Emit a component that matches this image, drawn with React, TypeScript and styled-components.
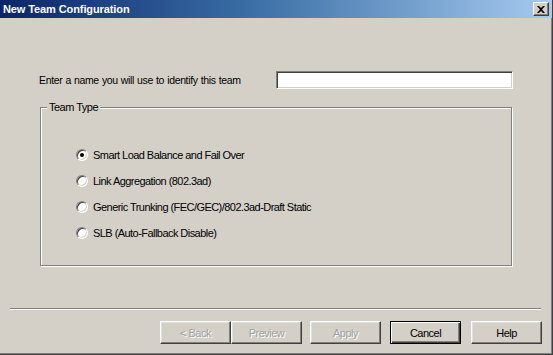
import React, { useState } from 'react';
import styled, { createGlobalStyle } from 'styled-components';

// Estilos globais: sem margem, fundo cinza clássico
const GlobalStyle = createGlobalStyle`
  html, body {
    margin: 0;
    padding: 0;
    background: #d4d0c8;
  }
  * {
    box-sizing: border-box;
  }
`;

const opcoes = [
  'Smart Load Balance and Fail Over',
  'Link Aggregation (802.3ad)',
  'Generic Trunking (FEC/GEC)/802.3ad-Draft Static',
  'SLB (Auto-Fallback Disable)',
];

const botoes = [
  { label: '< Back', disabled: true, gap: 0 },
  { label: 'Preview', disabled: true, gap: 0 },
  { label: 'Apply', disabled: true, gap: 8 },
  { label: 'Cancel', disabled: false, gap: 9, isDefault: true },
  { label: 'Help', disabled: false, gap: 10 },
];

const App: React.FC = () => {
  const [tipo, setTipo] = useState(0);

  return (
    <>
      <GlobalStyle />
      <Window>
        <TitleBar>
          <Title>New Team Configuration</Title>
          <CloseButton>
            <svg width="8" height="7" viewBox="0 0 8 7">
              <path d="M0 0 L2 0 L4 2 L6 0 L8 0 L5 3.5 L8 7 L6 7 L4 5 L2 7 L0 7 L3 3.5 Z" fill="#000" />
            </svg>
          </CloseButton>
        </TitleBar>

        <Content>
          <NameRow>
            <Label htmlFor="team-name">Enter a name you will use to identify this team</Label>
            <TextInput id="team-name" type="text" />
          </NameRow>

          <GroupBox>
            <Legend>Team Type</Legend>
            <RadioList>
              {opcoes.map((texto, i) => (
                <RadioRow key={texto} onClick={() => setTipo(i)}>
                  <RadioCircle $checked={tipo === i} />
                  <span>{texto}</span>
                </RadioRow>
              ))}
            </RadioList>
          </GroupBox>

          <Separator />

          <ButtonRow>
            {botoes.map((b) => (
              <Button
                key={b.label}
                disabled={b.disabled}
                $gap={b.gap}
                $default={!!b.isDefault}
              >
                {b.label}
              </Button>
            ))}
          </ButtonRow>
        </Content>
      </Window>
    </>
  );
};

export default App;

// Janela principal
const Window = styled.div`
  width: 553px;
  height: 355px;
  background: #d4d0c8;
  border-right: 1px solid #404040;
  border-bottom: 1px solid #404040;
  box-shadow: inset -1px -1px 0 #808080;
  display: flex;
  flex-direction: column;
  font-family: 'Liberation Sans', Arial, sans-serif;
  font-size: 11px;
  color: #000;
`;

// Barra de título com degradê azul
const TitleBar = styled.div`
  height: 18px;
  flex-shrink: 0;
  background: linear-gradient(to right, #0a246a 0%, #3a6ea5 45%, #a6caf0 100%);
  display: flex;
  align-items: center;
  justify-content: space-between;
  padding: 0 3px 0 3px;
`;

const Title = styled.span`
  color: #fff;
  font-weight: bold;
  font-size: 11px;
  letter-spacing: -0.1px;
`;

const CloseButton = styled.div`
  width: 16px;
  height: 14px;
  background: #d4d0c8;
  border: 1px solid;
  border-color: #fff #404040 #404040 #fff;
  box-shadow: inset -1px -1px 0 #808080;
  display: flex;
  align-items: center;
  justify-content: center;
`;

const Content = styled.div`
  flex: 1;
  display: flex;
  flex-direction: column;
  padding-top: 53px;
`;

// Linha com o nome do time
const NameRow = styled.div`
  display: flex;
  align-items: center;
  height: 18px;
  padding-left: 39px;
`;

const Label = styled.label`
  width: 237px;
  font-size: 10.5px;
  letter-spacing: -0.35px;
  word-spacing: 0.5px;
`;

const TextInput = styled.input`
  width: 237px;
  height: 18px;
  background: #fff;
  border: 1px solid;
  border-color: #808080 #fff #fff #808080;
  box-shadow: inset 1px 1px 0 #404040, inset -1px -1px 0 #d4d0c8;
  padding: 0 3px;
  font: inherit;
  outline: none;
`;

// Caixa de grupo "Team Type"
const GroupBox = styled.fieldset`
  margin: 12px 0 0 40px;
  width: 472px;
  height: 165px;
  padding: 0;
  border: 1px solid #808080;
  box-shadow: 1px 1px 0 #fff, inset 1px 1px 0 #fff;
  min-width: 0;
`;

const Legend = styled.legend`
  padding: 0 2px;
  margin-left: 6px;
  background: #d4d0c8;
  letter-spacing: -0.5px;
`;

const RadioList = styled.div`
  display: flex;
  flex-direction: column;
  padding: 29px 0 0 35px;
`;

const RadioRow = styled.div`
  display: flex;
  align-items: center;
  height: 26px;
  gap: 5px;
  letter-spacing: -0.55px;
  cursor: default;
`;

const RadioCircle = styled.span<{ $checked: boolean }>`
  position: relative;
  width: 12px;
  height: 12px;
  border-radius: 50%;
  background: #fff;
  border: 1px solid;
  border-color: #808080 #fff #fff #808080;
  box-shadow: inset 1px 1px 0 #404040, inset -1px -1px 0 #d4d0c8;
  flex-shrink: 0;

  &::after {
    content: '';
    display: ${(p) => (p.$checked ? 'block' : 'none')};
    position: absolute;
    left: 3px;
    top: 3px;
    width: 4px;
    height: 4px;
    border-radius: 50%;
    background: #000;
  }
`;

// Linha separadora gravada
const Separator = styled.div`
  margin: 42px 0 0 10px;
  width: 531px;
  height: 2px;
  border-top: 1px solid #808080;
  border-bottom: 1px solid #fff;
`;

const ButtonRow = styled.div`
  display: flex;
  justify-content: flex-end;
  padding: 11px 10px 0 0;
`;

const Button = styled.button<{ $gap: number; $default: boolean }>`
  width: 71px;
  height: 23px;
  margin-left: ${(p) => p.$gap}px;
  background: #d4d0c8;
  font: inherit;
  color: #000;
  padding: 0;
  border: 1px solid;
  border-color: ${(p) => (p.$default ? '#000' : '#fff #404040 #404040 #fff')};
  box-shadow: ${(p) =>
    p.$default
      ? 'inset 1px 1px 0 #fff, inset -1px -1px 0 #404040, inset -2px -2px 0 #808080'
      : 'inset -1px -1px 0 #808080, inset 1px 1px 0 #dfdfdf'};
  letter-spacing: -0.5px;

  &:disabled {
    color: #a0a0a0;
    text-shadow: 1px 1px 0 #fff;
  }
`;
